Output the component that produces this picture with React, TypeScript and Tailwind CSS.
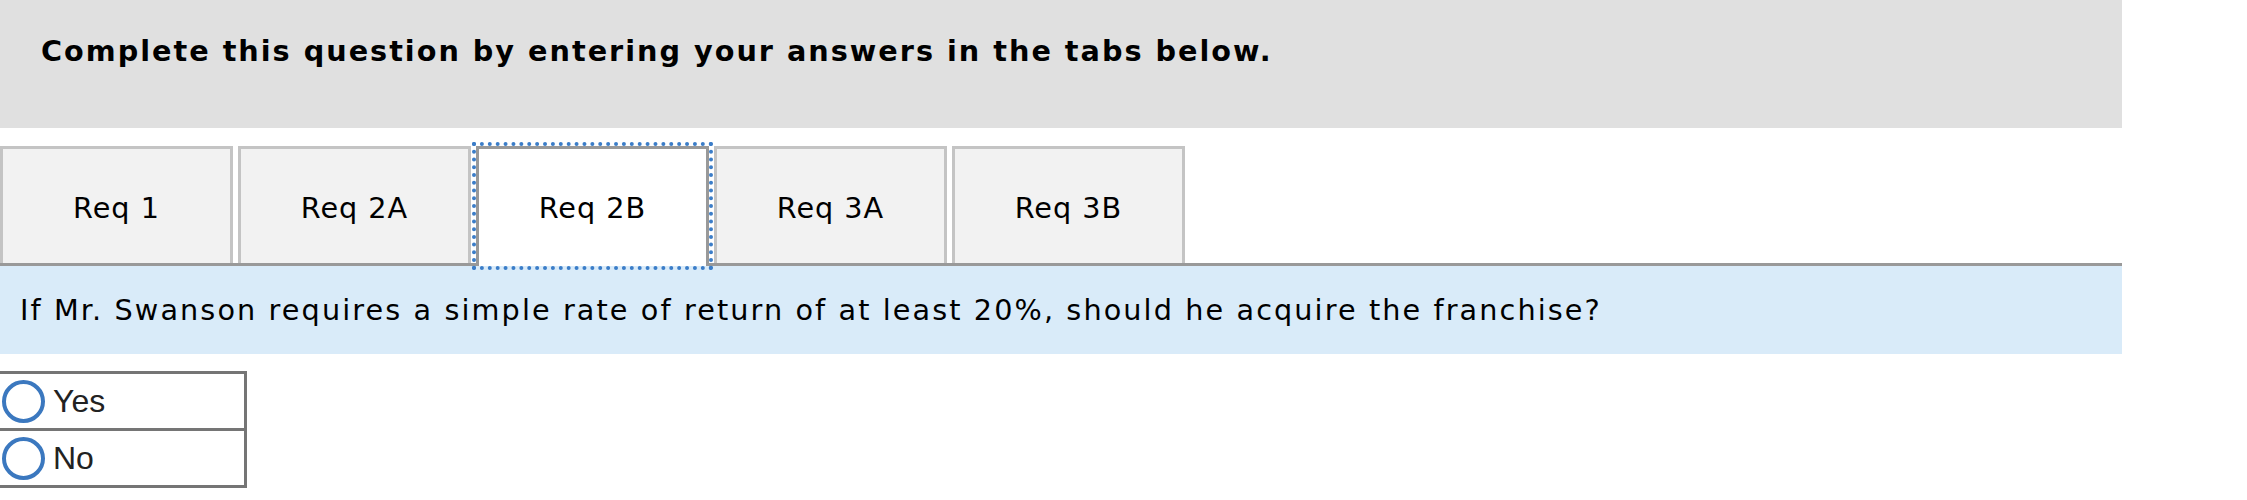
const tabs = ["Req 1", "Req 2A", "Req 2B", "Req 3A", "Req 3B"];
const active = 2;

function Radio({ label }: { label: string }) {
  return (
    <label className="flex h-[54px] items-center gap-[8px] pl-[2px]">
      <span className="h-[43px] w-[43px] shrink-0 rounded-full border-[4px] border-[#3b78bf] bg-white" />
      <span className="font-['Liberation_Sans',Arial,sans-serif] text-[32px] leading-none text-[#222]">
        {label}
      </span>
    </label>
  );
}

export default function App() {
  return (
    <div className="w-[2247px] bg-white font-['DejaVu_Sans',Verdana,sans-serif] text-black">
      <div className="w-[2122px]">
        {/* Instruction header */}
        <div className="h-[128px] bg-[#e0e0e0] pl-[41px] pt-[37px]">
          <h2 className="text-[28.7px] font-bold leading-[29px] tracking-[2px]">
            Complete this question by entering your answers in the tabs below.
          </h2>
        </div>

        {/* Tabs */}
        <div className="mt-[18px] flex items-start gap-[5px] border-b-[3px] border-[#999999]">
          {tabs.map((t, i) =>
            i === active ? (
              <button
                key={t}
                className="relative z-10 -mb-[3px] flex h-[120px] w-[233px] items-center justify-center border-[3px] border-b-0 border-[#999999] bg-white pt-[3px] text-[28.7px] tracking-[1px] outline-[4px] outline-dotted outline-[#3b7dc8]"
              >
                {t}
              </button>
            ) : (
              <button
                key={t}
                className="flex h-[117px] w-[233px] items-center justify-center border-[3px] border-b-0 border-[#c4c4c4] bg-[#f2f2f2] pt-[6px] text-[28.7px] tracking-[1px]"
              >
                {t}
              </button>
            )
          )}
        </div>

        {/* Question */}
        <div className="flex h-[88px] items-center bg-[#d9ebf9] pl-[20px] pt-[2px] text-[28.7px] tracking-[2.1px]">
          If Mr. Swanson requires a simple rate of return of at least 20%, should he acquire the franchise?
        </div>
      </div>

      {/* Answer choices */}
      <div className="mt-[17px] w-[247px] border-[3px] border-l-0 border-[#757575]">
        <Radio label="Yes" />
        <div className="h-[3px] bg-[#757575]" />
        <Radio label="No" />
      </div>
    </div>
  );
}
